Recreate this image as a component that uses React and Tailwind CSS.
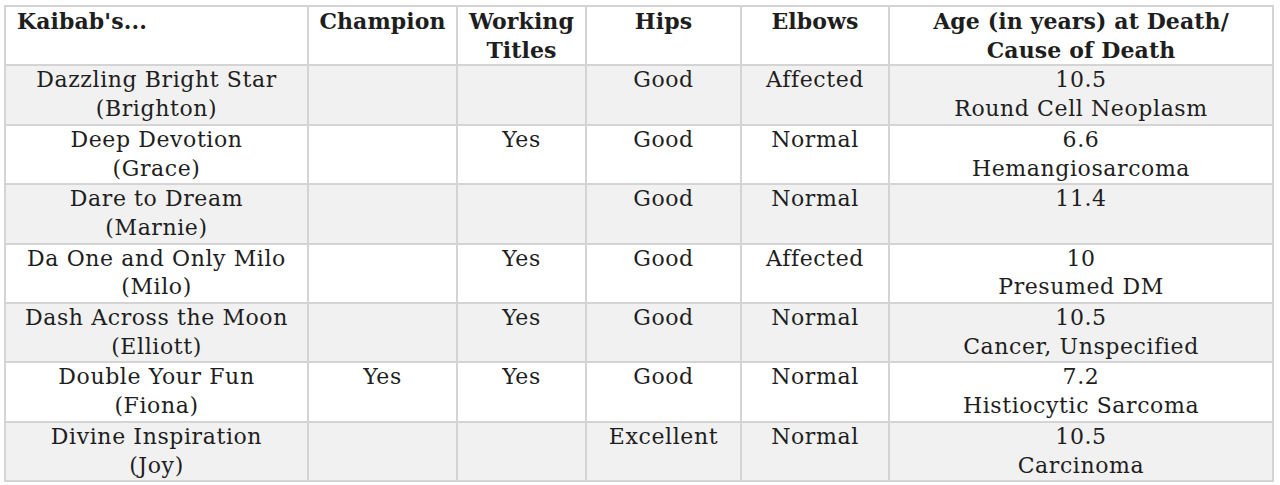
import React from 'react';

// Kaibab's litter table
const dogs = [
  { name: 'Dazzling Bright Star', call: 'Brighton', champ: '', titles: '', hips: 'Good', elbows: 'Affected', age: '10.5', cause: 'Round Cell Neoplasm' },
  { name: 'Deep Devotion', call: 'Grace', champ: '', titles: 'Yes', hips: 'Good', elbows: 'Normal', age: '6.6', cause: 'Hemangiosarcoma' },
  { name: 'Dare to Dream', call: 'Marnie', champ: '', titles: '', hips: 'Good', elbows: 'Normal', age: '11.4', cause: '' },
  { name: 'Da One and Only Milo', call: 'Milo', champ: '', titles: 'Yes', hips: 'Good', elbows: 'Affected', age: '10', cause: 'Presumed DM' },
  { name: 'Dash Across the Moon', call: 'Elliott', champ: '', titles: 'Yes', hips: 'Good', elbows: 'Normal', age: '10.5', cause: 'Cancer, Unspecified' },
  { name: 'Double Your Fun', call: 'Fiona', champ: 'Yes', titles: 'Yes', hips: 'Good', elbows: 'Normal', age: '7.2', cause: 'Histiocytic Sarcoma' },
  { name: 'Divine Inspiration', call: 'Joy', champ: '', titles: '', hips: 'Excellent', elbows: 'Normal', age: '10.5', cause: 'Carcinoma' },
];

const th = 'border-2 border-[#d4d4d4] align-top font-bold px-1 py-0 tracking-[0.1px]';
const td = 'border-2 border-[#d4d4d4] align-top text-center px-1 py-0 tracking-[0.6px]';

export default function App() {
  return (
    <div className="bg-white w-[1280px] h-[485px] pt-[5px] pl-[4px] text-[#1e1e1e] font-['DejaVu_Serif',serif] text-[22px] leading-[28.7px]">
      <table className="table-fixed border-collapse w-[1268px]">
        <colgroup>
          <col className="w-[303px]" />
          <col className="w-[149px]" />
          <col className="w-[129px]" />
          <col className="w-[155px]" />
          <col className="w-[148px]" />
          <col className="w-[384px]" />
        </colgroup>
        <thead>
          <tr>
            <th className={`${th} text-left pl-[11px]`}>Kaibab's...</th>
            <th className={th}>Champion</th>
            <th className={th}>Working Titles</th>
            <th className={th}>Hips</th>
            <th className={th}>Elbows</th>
            <th className={th}>Age (in years) at Death/<br />Cause of Death</th>
          </tr>
        </thead>
        <tbody>
          {dogs.map((d, i) => (
            <tr key={d.call} className={i % 2 === 0 ? 'bg-[#f1f1f1]' : 'bg-white'}>
              <td className={td}>{d.name}<br />({d.call})</td>
              <td className={td}>{d.champ}</td>
              <td className={td}>{d.titles}</td>
              <td className={td}>{d.hips}</td>
              <td className={td}>{d.elbows}</td>
              <td className={td}>{d.age}<br />{d.cause}</td>
            </tr>
          ))}
        </tbody>
      </table>
    </div>
  );
}
